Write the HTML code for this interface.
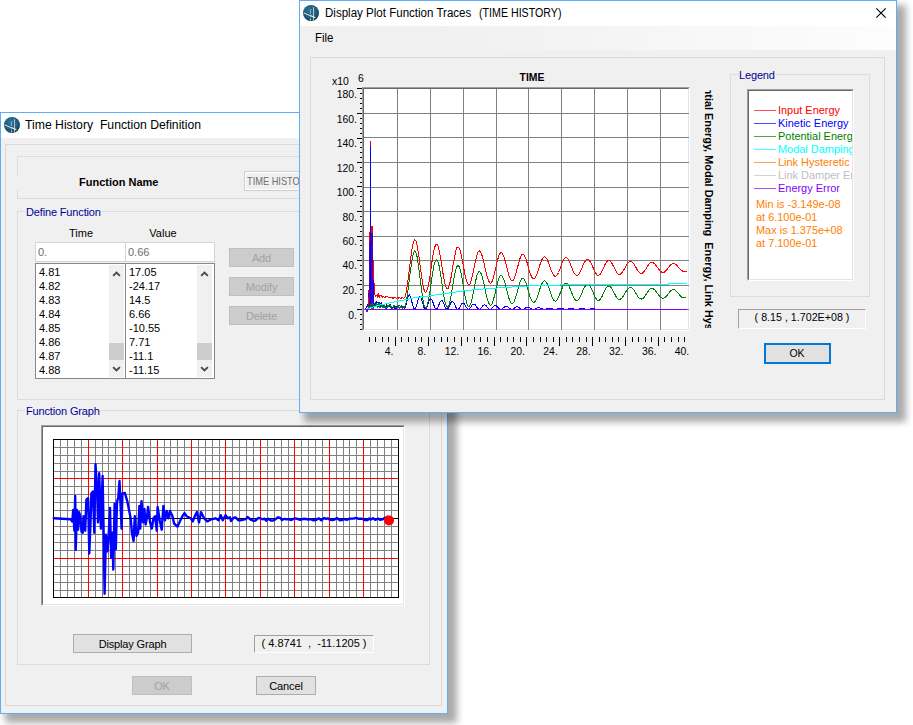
<!DOCTYPE html>
<html><head><meta charset="utf-8"><title>Time History Function</title>
<style>
html,body{margin:0;padding:0;background:#fff}
body{width:913px;height:725px;position:relative;overflow:hidden;font-family:"Liberation Sans",Arial,sans-serif;font-size:11px;color:#000}
div{box-sizing:border-box}
.abs,.t,.pl,.lg,.gl,.btn,.ttl{position:absolute;white-space:nowrap}
.win{position:absolute;background:#f0f0f0;border:1px solid #61acf5;box-shadow:7px 7px 7px 2px rgba(0,0,0,0.335);clip-path:inset(0 -24px -24px 0)}
.tbar{position:absolute;left:0;top:0;right:0;background:#fff}
.ttl{font-size:12px;line-height:14px;color:#000}
.t{font-size:11px;line-height:13px}
.pl{font-size:10.4px;line-height:12px}
.lg{font-size:10.95px;line-height:13px}
.gb{position:absolute;border:1px solid #dcdcdc}
.gl{font-size:11px;line-height:13px;color:#000096;background:#f0f0f0;padding:0 1px;letter-spacing:-0.15px}
.btn{font-size:11px;line-height:13px;letter-spacing:-0.15px;text-align:center;background:#e1e1e1;border:1px solid #adadad}
.btn.dis{background:#ccc;border-color:#bfbfbf;color:#a3a3a3}
.sunk{position:absolute;border:1px solid;border-color:#a0a0a0 #fff #fff #a0a0a0;text-align:center;font-size:11px}
</style></head><body>

<!-- ======================= back window: Time History Function Definition ======================= -->
<div class="win" style="left:0;top:112px;width:448px;height:602px"></div>
<div class="tbar" style="left:1px;top:113px;width:446px;height:25px;right:auto"></div>
<svg width="18" height="18" viewBox="0 0 18 18" style="position:absolute;left:3px;top:116px">
<defs><radialGradient id="ga" cx="45%" cy="40%" r="60%"><stop offset="0" stop-color="#2d7ca5"/><stop offset="0.6" stop-color="#1f6388"/><stop offset="0.85" stop-color="#184c69"/><stop offset="1" stop-color="#10303f"/></radialGradient></defs>
<circle cx="9" cy="9" r="8" fill="url(#ga)"/>
<path d="M11.2 3.2V16.6" stroke="#dfe9ef" stroke-width="1.1" fill="none"/>
<path d="M10.2 3.4V16.4" stroke="#16384c" stroke-width="0.9" fill="none"/>
<path d="M8.6 13V6.2Q8.6 5.3 9.6 5.3" stroke="#aac3d2" stroke-width="0.8" fill="none"/>
<path d="M1.8 8.6L13.4 13.8" stroke="#e6eef3" stroke-width="1.2" fill="none"/>
<path d="M1.6 7.8L9 11" stroke="#16384c" stroke-width="0.7" fill="none"/>
<path d="M8.6 14.4V16.4" stroke="#c9dbe5" stroke-width="1" fill="none"/>
</svg>
<div class="ttl" style="left:25px;top:118px;transform-origin:0 0;transform:scaleX(1.018)">Time History&nbsp; Function Definition</div>
<div class="gb" style="left:5px;top:144px;width:437px;height:562px;border-color:#dadada"></div>
<!-- function name group -->
<div class="gb" style="left:17px;top:156px;width:413px;height:43px"></div>
<div class="abs" style="left:16px;top:175px;width:3px;height:15px;background:#f0f0f0"></div>
<div class="t" style="left:79px;top:176px;font-weight:bold">Function Name</div>
<div class="abs" style="left:244px;top:171px;width:180px;height:20px;border:1px solid #cdcdcd;background:#f0f0f0;box-shadow:inset 0 0 0 1px #fff"></div>
<div class="t" style="left:247px;top:175px;color:#6d6d6d;transform-origin:0 0;transform:scaleX(0.84)">TIME HISTORY</div>
<!-- define function group -->
<div class="gb" style="left:17px;top:211px;width:413px;height:189px"></div>
<div class="gl" style="left:25px;top:206px">Define Function</div>
<div class="t" style="left:51px;top:227px;width:60px;text-align:center">Time</div>
<div class="t" style="left:133px;top:227px;width:60px;text-align:center">Value</div>
<div class="abs" style="left:35px;top:242px;width:91px;height:20px;border:1px solid #d4d4d4;background:#fff"></div>
<div class="abs" style="left:125px;top:242px;width:90px;height:20px;border:1px solid #d4d4d4;background:#fff"></div>
<div class="t" style="left:38px;top:246px;color:#6d6d6d">0.</div>
<div class="t" style="left:128px;top:246px;color:#6d6d6d">0.66</div>
<div class="abs" style="left:35px;top:263px;width:91px;height:116px;border:1px solid #828790;background:#fff"></div>
<div class="abs" style="left:125px;top:263px;width:90px;height:116px;border:1px solid #828790;background:#fff"></div>
<div class="abs" style="left:109px;top:265px;width:15px;height:112px;background:#f0f0f0"></div>
<div class="abs" style="left:197px;top:265px;width:15px;height:112px;background:#f0f0f0"></div>
<div class="abs" style="left:109px;top:343px;width:15px;height:17px;background:#cdcdcd"></div>
<div class="abs" style="left:197px;top:343px;width:15px;height:17px;background:#cdcdcd"></div>
<svg width="9" height="7" viewBox="0 0 9 7" style="position:absolute;left:112px;top:270px"><path d="M1.1 5.9L4.5 2.5L7.9 5.9" stroke="#4a4a4a" stroke-width="1.9" fill="none"/></svg><svg width="9" height="7" viewBox="0 0 9 7" style="position:absolute;left:112px;top:366px"><path d="M1.1 1.1L4.5 4.5L7.9 1.1" stroke="#4a4a4a" stroke-width="1.9" fill="none"/></svg><svg width="9" height="7" viewBox="0 0 9 7" style="position:absolute;left:200px;top:270px"><path d="M1.1 5.9L4.5 2.5L7.9 5.9" stroke="#4a4a4a" stroke-width="1.9" fill="none"/></svg><svg width="9" height="7" viewBox="0 0 9 7" style="position:absolute;left:200px;top:366px"><path d="M1.1 1.1L4.5 4.5L7.9 1.1" stroke="#4a4a4a" stroke-width="1.9" fill="none"/></svg>
<div class="t" style="left:39px;top:266px">4.81</div>
<div class="t" style="left:39px;top:280px">4.82</div>
<div class="t" style="left:39px;top:294px">4.83</div>
<div class="t" style="left:39px;top:308px">4.84</div>
<div class="t" style="left:39px;top:322px">4.85</div>
<div class="t" style="left:39px;top:336px">4.86</div>
<div class="t" style="left:39px;top:350px">4.87</div>
<div class="t" style="left:39px;top:364px">4.88</div>
<div class="t" style="left:129px;top:266px">17.05</div>
<div class="t" style="left:129px;top:280px">-24.17</div>
<div class="t" style="left:129px;top:294px">14.5</div>
<div class="t" style="left:129px;top:308px">6.66</div>
<div class="t" style="left:129px;top:322px">-10.55</div>
<div class="t" style="left:129px;top:336px">7.71</div>
<div class="t" style="left:129px;top:350px">-11.1</div>
<div class="t" style="left:129px;top:364px">-11.15</div>
<div class="btn dis" style="left:229px;top:248px;width:65px;height:19px;padding-top:3px">Add</div>
<div class="btn dis" style="left:229px;top:277px;width:65px;height:19px;padding-top:3px">Modify</div>
<div class="btn dis" style="left:229px;top:306px;width:65px;height:19px;padding-top:3px">Delete</div>
<!-- function graph group -->
<div class="gb" style="left:17px;top:410px;width:413px;height:255px"></div>
<div class="gl" style="left:25px;top:405px">Function Graph</div>
<div class="abs" style="left:41px;top:425px;width:364px;height:181px;background:#fff;border:1px solid;border-color:#a0a0a0 #fff #fff #a0a0a0"></div><div class="abs" style="left:42px;top:426px;width:362px;height:179px;border:1px solid;border-color:#696969 #e3e3e3 #e3e3e3 #696969"></div>
<svg width="913" height="725" viewBox="0 0 913 725" style="position:absolute;left:0;top:0" shape-rendering="crispEdges">
<g>
<line x1="60.5" y1="439.5" x2="60.5" y2="597.5" stroke="#808080"/>
<line x1="67.5" y1="439.5" x2="67.5" y2="597.5" stroke="#808080"/>
<line x1="74.5" y1="439.5" x2="74.5" y2="597.5" stroke="#808080"/>
<line x1="81.5" y1="439.5" x2="81.5" y2="597.5" stroke="#808080"/>
<line x1="95.5" y1="439.5" x2="95.5" y2="597.5" stroke="#808080"/>
<line x1="102.5" y1="439.5" x2="102.5" y2="597.5" stroke="#808080"/>
<line x1="108.5" y1="439.5" x2="108.5" y2="597.5" stroke="#808080"/>
<line x1="115.5" y1="439.5" x2="115.5" y2="597.5" stroke="#808080"/>
<line x1="129.5" y1="439.5" x2="129.5" y2="597.5" stroke="#808080"/>
<line x1="136.5" y1="439.5" x2="136.5" y2="597.5" stroke="#808080"/>
<line x1="143.5" y1="439.5" x2="143.5" y2="597.5" stroke="#808080"/>
<line x1="150.5" y1="439.5" x2="150.5" y2="597.5" stroke="#808080"/>
<line x1="164.5" y1="439.5" x2="164.5" y2="597.5" stroke="#808080"/>
<line x1="170.5" y1="439.5" x2="170.5" y2="597.5" stroke="#808080"/>
<line x1="177.5" y1="439.5" x2="177.5" y2="597.5" stroke="#808080"/>
<line x1="184.5" y1="439.5" x2="184.5" y2="597.5" stroke="#808080"/>
<line x1="198.5" y1="439.5" x2="198.5" y2="597.5" stroke="#808080"/>
<line x1="205.5" y1="439.5" x2="205.5" y2="597.5" stroke="#808080"/>
<line x1="212.5" y1="439.5" x2="212.5" y2="597.5" stroke="#808080"/>
<line x1="219.5" y1="439.5" x2="219.5" y2="597.5" stroke="#808080"/>
<line x1="232.5" y1="439.5" x2="232.5" y2="597.5" stroke="#808080"/>
<line x1="239.5" y1="439.5" x2="239.5" y2="597.5" stroke="#808080"/>
<line x1="246.5" y1="439.5" x2="246.5" y2="597.5" stroke="#808080"/>
<line x1="253.5" y1="439.5" x2="253.5" y2="597.5" stroke="#808080"/>
<line x1="267.5" y1="439.5" x2="267.5" y2="597.5" stroke="#808080"/>
<line x1="274.5" y1="439.5" x2="274.5" y2="597.5" stroke="#808080"/>
<line x1="281.5" y1="439.5" x2="281.5" y2="597.5" stroke="#808080"/>
<line x1="288.5" y1="439.5" x2="288.5" y2="597.5" stroke="#808080"/>
<line x1="301.5" y1="439.5" x2="301.5" y2="597.5" stroke="#808080"/>
<line x1="308.5" y1="439.5" x2="308.5" y2="597.5" stroke="#808080"/>
<line x1="315.5" y1="439.5" x2="315.5" y2="597.5" stroke="#808080"/>
<line x1="322.5" y1="439.5" x2="322.5" y2="597.5" stroke="#808080"/>
<line x1="336.5" y1="439.5" x2="336.5" y2="597.5" stroke="#808080"/>
<line x1="343.5" y1="439.5" x2="343.5" y2="597.5" stroke="#808080"/>
<line x1="349.5" y1="439.5" x2="349.5" y2="597.5" stroke="#808080"/>
<line x1="356.5" y1="439.5" x2="356.5" y2="597.5" stroke="#808080"/>
<line x1="370.5" y1="439.5" x2="370.5" y2="597.5" stroke="#808080"/>
<line x1="377.5" y1="439.5" x2="377.5" y2="597.5" stroke="#808080"/>
<line x1="384.5" y1="439.5" x2="384.5" y2="597.5" stroke="#808080"/>
<line x1="391.5" y1="439.5" x2="391.5" y2="597.5" stroke="#808080"/>
<line x1="53.5" y1="447.5" x2="398.5" y2="447.5" stroke="#808080"/>
<line x1="53.5" y1="455.5" x2="398.5" y2="455.5" stroke="#808080"/>
<line x1="53.5" y1="463.5" x2="398.5" y2="463.5" stroke="#808080"/>
<line x1="53.5" y1="471.5" x2="398.5" y2="471.5" stroke="#808080"/>
<line x1="53.5" y1="486.5" x2="398.5" y2="486.5" stroke="#808080"/>
<line x1="53.5" y1="494.5" x2="398.5" y2="494.5" stroke="#808080"/>
<line x1="53.5" y1="502.5" x2="398.5" y2="502.5" stroke="#808080"/>
<line x1="53.5" y1="510.5" x2="398.5" y2="510.5" stroke="#808080"/>
<line x1="53.5" y1="526.5" x2="398.5" y2="526.5" stroke="#808080"/>
<line x1="53.5" y1="534.5" x2="398.5" y2="534.5" stroke="#808080"/>
<line x1="53.5" y1="542.5" x2="398.5" y2="542.5" stroke="#808080"/>
<line x1="53.5" y1="550.5" x2="398.5" y2="550.5" stroke="#808080"/>
<line x1="53.5" y1="566.5" x2="398.5" y2="566.5" stroke="#808080"/>
<line x1="53.5" y1="574.5" x2="398.5" y2="574.5" stroke="#808080"/>
<line x1="53.5" y1="582.5" x2="398.5" y2="582.5" stroke="#808080"/>
<line x1="53.5" y1="590.5" x2="398.5" y2="590.5" stroke="#808080"/>
<line x1="88.5" y1="439.5" x2="88.5" y2="597.5" stroke="#f00"/>
<line x1="122.5" y1="439.5" x2="122.5" y2="597.5" stroke="#f00"/>
<line x1="157.5" y1="439.5" x2="157.5" y2="597.5" stroke="#f00"/>
<line x1="191.5" y1="439.5" x2="191.5" y2="597.5" stroke="#f00"/>
<line x1="225.5" y1="439.5" x2="225.5" y2="597.5" stroke="#f00"/>
<line x1="260.5" y1="439.5" x2="260.5" y2="597.5" stroke="#f00"/>
<line x1="294.5" y1="439.5" x2="294.5" y2="597.5" stroke="#f00"/>
<line x1="329.5" y1="439.5" x2="329.5" y2="597.5" stroke="#f00"/>
<line x1="363.5" y1="439.5" x2="363.5" y2="597.5" stroke="#f00"/>
<line x1="53.5" y1="478.5" x2="398.5" y2="478.5" stroke="#f00"/>
<line x1="53.5" y1="558.5" x2="398.5" y2="558.5" stroke="#f00"/>
<line x1="53.5" y1="518.5" x2="398.5" y2="518.5" stroke="#000"/>
<rect x="53.5" y="439.5" width="345.0" height="158.0" fill="none" stroke="#000"/>
</g>
<polyline points="53.7,518.3 70.7,519.3 72.3,521.4 73.2,510.0 74.4,530.7 75.2,495.9 75.7,549.9 76.9,510.0 78.1,529.7 79.0,512.1 80.2,516.2 81.5,531.7 82.7,532.8 83.5,516.2 85.2,530.7 86.4,499.7 88.1,498.0 89.3,553.5 90.6,520.3 91.4,493.5 93.0,491.4 94.3,532.8 95.5,464.1 97.2,491.4 98.0,522.4 99.2,473.2 100.9,528.6 102.6,475.9 103.4,518.3 104.6,593.8 105.9,534.8 107.5,551.4 108.8,532.8 110.0,507.9 111.2,557.6 112.5,532.8 113.3,569.6 114.6,503.8 115.8,549.3 117.0,501.7 118.3,497.6 119.5,481.0 121.6,528.6 122.4,493.5 124.9,493.0 127.4,501.7 128.2,505.9 130.7,518.3 131.9,532.8 133.6,541.0 134.8,516.2 136.5,535.9 138.1,532.8 139.4,505.9 140.2,528.6 141.5,501.3 143.1,522.4 144.4,509.0 145.6,524.5 146.8,518.3 148.1,506.9 150.1,522.4 151.8,528.6 153.5,518.3 155.1,516.2 156.8,530.7 157.6,506.9 159.7,520.3 161.7,529.7 163.4,505.9 165.0,520.3 166.7,511.0 168.4,518.3 170.0,511.0 172.5,516.2 174.1,523.5 177.5,526.6 180.4,520.3 182.4,516.2 184.5,513.1 186.6,516.2 190.7,518.3 192.8,521.4 194.8,516.2 196.9,512.1 199.0,522.4 201.0,512.1 204.1,518.3 207.3,521.4 211.4,519.3 215.5,518.3 218.6,520.3 220.7,515.2 222.8,520.3 225.5,515.2 227.9,518.3 230.0,517.2 231.0,521.0 233.8,517.6 235.6,517.5 238.6,520.3 240.4,520.4 243.6,519.7 245.8,519.2 247.6,517.0 250.7,519.6 253.2,520.7 255.5,520.5 258.4,517.9 260.4,518.2 262.4,519.3 264.4,518.7 266.2,520.6 268.4,518.8 270.9,520.5 273.2,520.5 275.6,519.1 278.0,517.3 280.3,517.9 281.9,520.1 283.8,518.9 286.6,519.2 288.7,519.1 291.2,520.0 292.9,519.2 294.9,518.3 297.8,519.0 300.3,519.8 303.3,518.8 305.9,519.0 308.3,519.6 310.7,519.1 313.0,520.3 315.7,520.1 318.9,518.3 321.3,520.3 324.3,518.0 326.1,518.8 327.8,518.3 329.5,519.5 332.4,520.1 334.2,519.6 336.9,518.1 339.9,520.2 341.8,520.1 344.1,519.0 347.3,519.8 349.1,518.8 351.5,518.6 353.5,518.6 356.2,517.9 358.7,518.9 360.3,518.6 362.9,519.0 364.6,520.0 367.5,520.0 369.3,518.5 370.9,519.6 373.0,518.3 375.2,519.8 378.1,518.5 380.0,519.8 382.5,519.4 384.2,518.2 386.0,517.5 387.5,516.8 389.0,520.4" fill="none" stroke="#0000ff" stroke-width="2.4" stroke-linejoin="round" stroke-linecap="round" shape-rendering="auto"/>
<circle cx="389" cy="520.4" r="5" fill="#ff0000" shape-rendering="auto"/>
</svg>
<div class="btn" style="left:73px;top:634px;width:119px;height:19px;padding-top:3px">Display Graph</div>
<div class="sunk" style="left:254px;top:635px;width:120px;height:18px;line-height:15px">( 4.8741&nbsp; ,&nbsp; -11.1205 )</div>
<div class="btn dis" style="left:132px;top:676px;width:60px;height:19px;padding-top:3px">OK</div>
<div class="btn" style="left:256px;top:676px;width:60px;height:19px;padding-top:3px">Cancel</div>

<!-- ======================= front window: Display Plot Function Traces ======================= -->
<div class="win" style="left:299px;top:0;width:598px;height:413px"></div>
<div class="tbar" style="left:300px;top:1px;width:596px;height:25px;right:auto"></div>
<div class="abs" style="left:300px;top:26px;width:596px;height:24px;background:linear-gradient(90deg,#f0f0f0 0%,#f1f1f1 30%,#fdfdfd 100%)"></div>
<svg width="18" height="18" viewBox="0 0 18 18" style="position:absolute;left:302px;top:4px">
<defs><radialGradient id="gb" cx="45%" cy="40%" r="60%"><stop offset="0" stop-color="#2d7ca5"/><stop offset="0.6" stop-color="#1f6388"/><stop offset="0.85" stop-color="#184c69"/><stop offset="1" stop-color="#10303f"/></radialGradient></defs>
<circle cx="9" cy="9" r="8" fill="url(#gb)"/>
<path d="M11.2 3.2V16.6" stroke="#dfe9ef" stroke-width="1.1" fill="none"/>
<path d="M10.2 3.4V16.4" stroke="#16384c" stroke-width="0.9" fill="none"/>
<path d="M8.6 13V6.2Q8.6 5.3 9.6 5.3" stroke="#aac3d2" stroke-width="0.8" fill="none"/>
<path d="M1.8 8.6L13.4 13.8" stroke="#e6eef3" stroke-width="1.2" fill="none"/>
<path d="M1.6 7.8L9 11" stroke="#16384c" stroke-width="0.7" fill="none"/>
<path d="M8.6 14.4V16.4" stroke="#c9dbe5" stroke-width="1" fill="none"/>
</svg>
<div class="ttl" style="left:325px;top:6px;transform-origin:0 0;transform:scaleX(0.962)">Display Plot Function Traces</div>
<div class="ttl" style="left:479px;top:6px;transform-origin:0 0;transform:scaleX(0.888)">(TIME HISTORY)</div>
<svg width="12" height="12" viewBox="0 0 12 12" style="position:absolute;left:875px;top:7px"><path d="M1.3 1.3L10.7 10.7M10.7 1.3L1.3 10.7" stroke="#000" stroke-width="1.15" fill="none"/></svg>
<div class="ttl" style="left:315px;top:31px;transform-origin:0 0;transform:scaleX(0.95)">File</div>
<div class="gb" style="left:310px;top:57px;width:575px;height:343px;border-color:#dadada"></div>
<!-- plot -->
<div class="pl" style="left:332px;top:76px">x10</div>
<div class="pl" style="left:358px;top:73px">6</div>
<div class="pl" style="left:502px;top:72px;width:60px;text-align:center;font-weight:bold">TIME</div>
<div class="abs" style="left:362px;top:87px;width:328px;height:244px;background:#fff;border:1px solid;border-color:#a0a0a0 #fff #fff #a0a0a0"></div><div class="abs" style="left:363px;top:88px;width:326px;height:242px;border:1px solid;border-color:#696969 #e3e3e3 #e3e3e3 #696969"></div>
<svg width="913" height="725" viewBox="0 0 913 725" style="position:absolute;left:0;top:0" shape-rendering="crispEdges">
<line x1="397.5" y1="89" x2="397.5" y2="330" stroke="#808080"/>
<line x1="430.5" y1="89" x2="430.5" y2="330" stroke="#808080"/>
<line x1="463.5" y1="89" x2="463.5" y2="330" stroke="#808080"/>
<line x1="496.5" y1="89" x2="496.5" y2="330" stroke="#808080"/>
<line x1="528.5" y1="89" x2="528.5" y2="330" stroke="#808080"/>
<line x1="561.5" y1="89" x2="561.5" y2="330" stroke="#808080"/>
<line x1="594.5" y1="89" x2="594.5" y2="330" stroke="#808080"/>
<line x1="627.5" y1="89" x2="627.5" y2="330" stroke="#808080"/>
<line x1="660.5" y1="89" x2="660.5" y2="330" stroke="#808080"/>
<line x1="364" y1="309.5" x2="689" y2="309.5" stroke="#808080"/>
<line x1="364" y1="285.5" x2="689" y2="285.5" stroke="#808080"/>
<line x1="364" y1="260.5" x2="689" y2="260.5" stroke="#808080"/>
<line x1="364" y1="236.5" x2="689" y2="236.5" stroke="#808080"/>
<line x1="364" y1="211.5" x2="689" y2="211.5" stroke="#808080"/>
<line x1="364" y1="187.5" x2="689" y2="187.5" stroke="#808080"/>
<line x1="364" y1="162.5" x2="689" y2="162.5" stroke="#808080"/>
<line x1="364" y1="137.5" x2="689" y2="137.5" stroke="#808080"/>
<line x1="364" y1="113.5" x2="689" y2="113.5" stroke="#808080"/>
<line x1="360" y1="329.5" x2="362" y2="329.5" stroke="#000"/>
<line x1="360" y1="324.5" x2="362" y2="324.5" stroke="#000"/>
<line x1="360" y1="319.5" x2="362" y2="319.5" stroke="#000"/>
<line x1="360" y1="314.5" x2="362" y2="314.5" stroke="#000"/>
<line x1="357" y1="309.5" x2="362" y2="309.5" stroke="#000"/>
<line x1="360" y1="304.5" x2="362" y2="304.5" stroke="#000"/>
<line x1="360" y1="299.5" x2="362" y2="299.5" stroke="#000"/>
<line x1="360" y1="294.5" x2="362" y2="294.5" stroke="#000"/>
<line x1="360" y1="289.5" x2="362" y2="289.5" stroke="#000"/>
<line x1="357" y1="284.5" x2="362" y2="284.5" stroke="#000"/>
<line x1="360" y1="280.5" x2="362" y2="280.5" stroke="#000"/>
<line x1="360" y1="275.5" x2="362" y2="275.5" stroke="#000"/>
<line x1="360" y1="270.5" x2="362" y2="270.5" stroke="#000"/>
<line x1="360" y1="265.5" x2="362" y2="265.5" stroke="#000"/>
<line x1="357" y1="260.5" x2="362" y2="260.5" stroke="#000"/>
<line x1="360" y1="255.5" x2="362" y2="255.5" stroke="#000"/>
<line x1="360" y1="250.5" x2="362" y2="250.5" stroke="#000"/>
<line x1="360" y1="245.5" x2="362" y2="245.5" stroke="#000"/>
<line x1="360" y1="240.5" x2="362" y2="240.5" stroke="#000"/>
<line x1="357" y1="236.5" x2="362" y2="236.5" stroke="#000"/>
<line x1="360" y1="231.5" x2="362" y2="231.5" stroke="#000"/>
<line x1="360" y1="226.5" x2="362" y2="226.5" stroke="#000"/>
<line x1="360" y1="221.5" x2="362" y2="221.5" stroke="#000"/>
<line x1="360" y1="216.5" x2="362" y2="216.5" stroke="#000"/>
<line x1="357" y1="211.5" x2="362" y2="211.5" stroke="#000"/>
<line x1="360" y1="206.5" x2="362" y2="206.5" stroke="#000"/>
<line x1="360" y1="201.5" x2="362" y2="201.5" stroke="#000"/>
<line x1="360" y1="196.5" x2="362" y2="196.5" stroke="#000"/>
<line x1="360" y1="191.5" x2="362" y2="191.5" stroke="#000"/>
<line x1="357" y1="186.5" x2="362" y2="186.5" stroke="#000"/>
<line x1="360" y1="182.5" x2="362" y2="182.5" stroke="#000"/>
<line x1="360" y1="177.5" x2="362" y2="177.5" stroke="#000"/>
<line x1="360" y1="172.5" x2="362" y2="172.5" stroke="#000"/>
<line x1="360" y1="167.5" x2="362" y2="167.5" stroke="#000"/>
<line x1="357" y1="162.5" x2="362" y2="162.5" stroke="#000"/>
<line x1="360" y1="157.5" x2="362" y2="157.5" stroke="#000"/>
<line x1="360" y1="152.5" x2="362" y2="152.5" stroke="#000"/>
<line x1="360" y1="147.5" x2="362" y2="147.5" stroke="#000"/>
<line x1="360" y1="142.5" x2="362" y2="142.5" stroke="#000"/>
<line x1="357" y1="138.5" x2="362" y2="138.5" stroke="#000"/>
<line x1="360" y1="133.5" x2="362" y2="133.5" stroke="#000"/>
<line x1="360" y1="128.5" x2="362" y2="128.5" stroke="#000"/>
<line x1="360" y1="123.5" x2="362" y2="123.5" stroke="#000"/>
<line x1="360" y1="118.5" x2="362" y2="118.5" stroke="#000"/>
<line x1="357" y1="113.5" x2="362" y2="113.5" stroke="#000"/>
<line x1="360" y1="108.5" x2="362" y2="108.5" stroke="#000"/>
<line x1="360" y1="103.5" x2="362" y2="103.5" stroke="#000"/>
<line x1="360" y1="98.5" x2="362" y2="98.5" stroke="#000"/>
<line x1="360" y1="93.5" x2="362" y2="93.5" stroke="#000"/>
<line x1="357" y1="88.5" x2="362" y2="88.5" stroke="#000"/>
<line x1="369.5" y1="337" x2="369.5" y2="342" stroke="#000"/>
<line x1="375.5" y1="337" x2="375.5" y2="342" stroke="#000"/>
<line x1="382.5" y1="337" x2="382.5" y2="342" stroke="#000"/>
<line x1="388.5" y1="337" x2="388.5" y2="342" stroke="#000"/>
<line x1="395.5" y1="337" x2="395.5" y2="346" stroke="#000"/>
<line x1="401.5" y1="337" x2="401.5" y2="342" stroke="#000"/>
<line x1="408.5" y1="337" x2="408.5" y2="342" stroke="#000"/>
<line x1="415.5" y1="337" x2="415.5" y2="342" stroke="#000"/>
<line x1="421.5" y1="337" x2="421.5" y2="342" stroke="#000"/>
<line x1="428.5" y1="337" x2="428.5" y2="346" stroke="#000"/>
<line x1="434.5" y1="337" x2="434.5" y2="342" stroke="#000"/>
<line x1="441.5" y1="337" x2="441.5" y2="342" stroke="#000"/>
<line x1="447.5" y1="337" x2="447.5" y2="342" stroke="#000"/>
<line x1="454.5" y1="337" x2="454.5" y2="342" stroke="#000"/>
<line x1="461.5" y1="337" x2="461.5" y2="346" stroke="#000"/>
<line x1="467.5" y1="337" x2="467.5" y2="342" stroke="#000"/>
<line x1="474.5" y1="337" x2="474.5" y2="342" stroke="#000"/>
<line x1="480.5" y1="337" x2="480.5" y2="342" stroke="#000"/>
<line x1="487.5" y1="337" x2="487.5" y2="342" stroke="#000"/>
<line x1="494.5" y1="337" x2="494.5" y2="346" stroke="#000"/>
<line x1="500.5" y1="337" x2="500.5" y2="342" stroke="#000"/>
<line x1="507.5" y1="337" x2="507.5" y2="342" stroke="#000"/>
<line x1="513.5" y1="337" x2="513.5" y2="342" stroke="#000"/>
<line x1="520.5" y1="337" x2="520.5" y2="342" stroke="#000"/>
<line x1="526.5" y1="337" x2="526.5" y2="346" stroke="#000"/>
<line x1="533.5" y1="337" x2="533.5" y2="342" stroke="#000"/>
<line x1="540.5" y1="337" x2="540.5" y2="342" stroke="#000"/>
<line x1="546.5" y1="337" x2="546.5" y2="342" stroke="#000"/>
<line x1="553.5" y1="337" x2="553.5" y2="342" stroke="#000"/>
<line x1="559.5" y1="337" x2="559.5" y2="346" stroke="#000"/>
<line x1="566.5" y1="337" x2="566.5" y2="342" stroke="#000"/>
<line x1="572.5" y1="337" x2="572.5" y2="342" stroke="#000"/>
<line x1="579.5" y1="337" x2="579.5" y2="342" stroke="#000"/>
<line x1="586.5" y1="337" x2="586.5" y2="342" stroke="#000"/>
<line x1="592.5" y1="337" x2="592.5" y2="346" stroke="#000"/>
<line x1="599.5" y1="337" x2="599.5" y2="342" stroke="#000"/>
<line x1="605.5" y1="337" x2="605.5" y2="342" stroke="#000"/>
<line x1="612.5" y1="337" x2="612.5" y2="342" stroke="#000"/>
<line x1="618.5" y1="337" x2="618.5" y2="342" stroke="#000"/>
<line x1="625.5" y1="337" x2="625.5" y2="346" stroke="#000"/>
<line x1="632.5" y1="337" x2="632.5" y2="342" stroke="#000"/>
<line x1="638.5" y1="337" x2="638.5" y2="342" stroke="#000"/>
<line x1="645.5" y1="337" x2="645.5" y2="342" stroke="#000"/>
<line x1="651.5" y1="337" x2="651.5" y2="342" stroke="#000"/>
<line x1="658.5" y1="337" x2="658.5" y2="346" stroke="#000"/>
<line x1="664.5" y1="337" x2="664.5" y2="342" stroke="#000"/>
<line x1="671.5" y1="337" x2="671.5" y2="342" stroke="#000"/>
<line x1="678.5" y1="337" x2="678.5" y2="342" stroke="#000"/>
<line x1="684.5" y1="337" x2="684.5" y2="342" stroke="#000"/>
<g fill="none" stroke-width="1" shape-rendering="crispEdges" stroke-linejoin="round">
<polyline points="365.0,309.5 366.5,308.5 367.5,306.0 368.5,303.0 368.8,290.5 369.1,308.4 369.4,241.8 369.7,308.7 370.0,232.3 370.3,306.0 370.5,141.0 370.7,300.0 370.8,225.9 371.1,308.8 371.4,227.1 371.7,308.9 372.0,226.5 372.3,308.7 372.6,234.2 372.9,307.3 373.2,260.9 373.5,308.5 373.8,272.0 374.2,293.0 374.4,292.6 375.1,294.9 375.8,296.7 376.5,295.2 377.2,294.6 377.9,297.4 378.6,293.7 379.3,297.3 380.0,295.3 380.7,295.1 381.0,295.4 381.7,296.0 382.4,297.6 383.1,295.9 383.8,297.0 384.5,297.3 385.2,296.7 385.9,297.2 386.6,296.2 387.3,296.3 388.0,296.7 388.7,297.8 389.4,297.4 390.1,297.2 390.8,297.8 391.5,297.7 392.0,297.6 392.7,298.2 393.4,298.1 394.1,297.6 394.8,298.0 395.5,297.9 396.2,298.3 396.9,298.2 397.6,297.8 398.3,298.4 399.0,297.7 399.7,298.0 400.4,298.3 401.1,297.8 401.8,298.1 402.5,297.8 403.2,298.3 403.9,298.4 404.0,298.2 405.1,296.8 406.2,292.6 407.2,286.1 408.3,278.0 409.4,268.9 410.5,259.9 411.6,251.8 412.6,245.3 413.7,241.1 414.8,239.7 415.9,241.0 417.0,244.7 418.0,250.6 419.1,257.9 420.2,266.0 421.3,274.2 422.4,281.5 423.4,287.4 424.5,291.1 425.6,292.4 426.7,291.2 427.8,287.8 428.9,282.4 430.0,275.7 431.1,268.2 432.1,260.8 433.2,254.1 434.3,248.7 435.4,245.3 436.5,244.1 437.6,245.2 438.7,248.4 439.8,253.4 440.9,259.6 441.9,266.6 443.0,273.5 444.1,279.7 445.2,284.7 446.3,287.9 447.4,289.0 448.4,288.0 449.5,285.0 450.5,280.3 451.6,274.5 452.6,267.9 453.7,261.4 454.8,255.6 455.8,250.9 456.8,247.9 457.9,246.9 459.0,247.8 460.1,250.5 461.2,254.7 462.3,260.0 463.4,265.9 464.4,271.8 465.5,277.1 466.6,281.3 467.7,284.0 468.8,284.9 469.9,284.1 470.9,281.7 471.9,277.9 473.0,273.2 474.1,267.9 475.1,262.6 476.2,257.9 477.2,254.1 478.2,251.7 479.3,250.9 480.3,251.6 481.3,253.5 482.4,256.5 483.4,260.3 484.4,264.8 485.4,269.3 486.4,273.8 487.4,277.6 488.5,280.6 489.5,282.5 490.5,283.2 491.6,282.5 492.6,280.3 493.6,276.9 494.7,272.6 495.8,267.9 496.8,263.2 497.9,258.9 498.9,255.5 499.9,253.3 501.0,252.6 502.0,253.2 503.0,254.8 504.1,257.5 505.1,260.8 506.1,264.7 507.1,268.7 508.1,272.6 509.1,275.9 510.2,278.6 511.2,280.2 512.2,280.8 513.2,280.2 514.3,278.3 515.4,275.3 516.4,271.6 517.5,267.6 518.5,263.5 519.6,259.8 520.6,256.8 521.7,254.9 522.7,254.3 523.8,254.9 524.9,256.6 526.0,259.3 527.1,262.8 528.2,266.6 529.2,270.3 530.3,273.8 531.4,276.5 532.5,278.2 533.6,278.8 534.7,278.3 535.8,276.7 536.9,274.2 538.0,271.2 539.0,267.8 540.1,264.3 541.2,261.3 542.3,258.8 543.4,257.2 544.5,256.7 545.6,257.2 546.7,258.6 547.7,260.8 548.8,263.5 549.9,266.5 551.0,269.6 552.1,272.3 553.1,274.5 554.2,275.9 555.3,276.4 556.4,275.9 557.4,274.6 558.5,272.5 559.5,269.9 560.6,267.1 561.7,264.2 562.7,261.6 563.8,259.5 564.8,258.2 565.9,257.7 567.0,258.1 568.1,259.4 569.1,261.3 570.2,263.8 571.3,266.5 572.4,269.3 573.5,271.8 574.5,273.7 575.6,275.0 576.7,275.4 577.8,275.0 578.9,273.9 580.0,272.1 581.1,269.9 582.2,267.4 583.2,264.9 584.3,262.7 585.4,260.9 586.5,259.8 587.6,259.4 588.7,259.8 589.7,260.9 590.8,262.7 591.9,264.9 593.0,267.4 594.0,269.9 595.1,272.1 596.2,273.9 597.2,275.0 598.3,275.4 599.3,275.0 600.4,274.0 601.4,272.3 602.5,270.2 603.5,267.9 604.5,265.5 605.6,263.4 606.6,261.7 607.7,260.7 608.7,260.3 609.8,260.6 610.8,261.6 611.9,263.2 612.9,265.2 614.0,267.3 615.1,269.5 616.1,271.5 617.2,273.1 618.2,274.1 619.3,274.4 620.3,274.1 621.3,273.4 622.4,272.1 623.4,270.6 624.4,268.8 625.4,266.9 626.4,265.1 627.4,263.6 628.5,262.3 629.5,261.6 630.5,261.3 631.6,261.6 632.6,262.5 633.7,263.8 634.8,265.5 635.9,267.3 636.9,269.2 638.0,270.9 639.1,272.2 640.1,273.1 641.2,273.4 642.3,273.1 643.3,272.3 644.4,271.1 645.4,269.6 646.5,267.9 647.6,266.2 648.6,264.7 649.7,263.5 650.7,262.7 651.8,262.4 652.8,262.6 653.8,263.2 654.9,264.1 655.9,265.4 656.9,266.7 657.9,268.2 658.9,269.5 659.9,270.8 661.0,271.7 662.0,272.3 663.0,272.5 664.0,272.3 665.1,271.6 666.1,270.6 667.2,269.4 668.2,267.9 669.2,266.5 670.3,265.3 671.3,264.3 672.4,263.6 673.4,263.4 674.4,263.6 675.4,264.2 676.5,265.0 677.5,266.1 678.5,267.3 679.5,268.6 680.5,269.7 681.6,270.5 682.6,271.1 683.6,271.3 685.0,271.3 686.5,271.3" stroke="#ff0000"/>
<polyline points="365.0,309.5 366.5,307.0 367.5,305.0 368.5,306.0" stroke="#0000ff"/>
<polyline points="368.9,293.4 369.2,305.5 369.5,242.6 369.8,306.2 370.1,236.8 370.3,306.0 370.7,300.0 370.8,233.6 371.1,307.2 371.4,235.7 371.7,305.2 372.0,232.8 372.3,306.3 372.6,252.5 372.9,306.2 373.2,280.3" stroke="#0000ff" stroke-opacity="0.7"/>
<polyline points="370.5,306.0 370.5,146.0" stroke="#0000ff"/>
<polyline points="373.2,280.3 373.6,307.9 374.1,306.7 374.6,303.1 375.1,303.9 375.6,305.8 376.1,301.6 376.6,304.5 377.1,302.6 377.6,302.4 378.1,302.0 378.6,306.7 379.1,302.6 379.6,303.4 380.1,304.4 380.6,307.5 381.1,302.5 381.6,304.9 382.1,305.6 382.6,307.7 383.1,307.3 383.6,307.6 384.1,304.1 384.6,305.0 385.0,305.6 385.5,308.3 386.0,308.7 386.5,304.6 387.0,304.8 387.5,305.1 388.0,305.2 388.5,306.4 389.0,307.0 389.5,305.5 390.0,304.3 390.5,306.3 391.0,306.1 391.5,307.0 392.0,308.7 392.5,307.6 393.0,306.9 393.5,307.3 394.0,307.6 394.5,305.1 395.0,308.5 395.5,308.1 396.0,308.5 396.5,308.2 397.0,306.6 397.5,306.7 398.0,305.7 398.5,307.6 399.0,305.6 399.5,305.7 400.0,306.2 400.5,306.1 401.0,306.8 401.5,305.9 402.0,305.8 402.5,306.3 403.0,306.2 403.5,307.1 404.5,308.5 405.4,307.2 406.4,303.8 407.3,299.5 408.3,296.1 409.2,294.8 410.1,295.8 411.0,298.4 411.9,302.1 412.8,305.7 413.7,308.3 414.6,309.3 415.5,308.4 416.4,306.1 417.2,303.0 418.1,299.8 419.0,297.5 419.9,296.6 420.8,297.5 421.7,299.8 422.6,302.9 423.5,306.1 424.4,308.4 425.3,309.3 426.2,308.6 427.1,306.7 428.0,304.0 429.0,301.4 429.9,299.4 430.8,298.7 431.7,299.4 432.6,301.3 433.5,304.0 434.4,306.6 435.3,308.6 436.2,309.3 437.1,308.7 438.0,307.1 438.9,304.9 439.8,302.6 440.7,301.0 441.6,300.4 442.5,301.0 443.4,302.6 444.3,304.8 445.2,307.1 446.1,308.7 447.0,309.3 447.9,308.8 448.8,307.3 449.6,305.4 450.5,303.4 451.4,301.9 452.3,301.4 453.2,301.9 454.1,303.4 455.0,305.3 455.9,307.3 456.8,308.8 457.7,309.3 458.6,308.9 459.5,307.7 460.4,306.2 461.2,304.6 462.1,303.4 463.0,303.0 463.9,303.4 464.8,304.6 465.7,306.1 466.6,307.7 467.5,308.9 468.4,309.3 469.3,308.9 470.2,308.0 471.1,306.7 472.0,305.3 472.9,304.4 473.8,304.0 474.7,304.4 475.6,305.3 476.5,306.6 477.4,308.0 478.3,308.9 479.2,309.3 480.1,309.0 481.0,308.2 481.9,307.1 482.8,305.9 483.7,305.1 484.6,304.8 485.5,305.1 486.4,305.9 487.3,307.1 488.2,308.2 489.1,309.0 490.0,309.3 490.9,309.1 491.8,308.4 492.7,307.5 493.6,306.5 494.5,305.8 495.4,305.6 496.3,305.8 497.2,306.5 498.1,307.4 499.0,308.4 499.9,309.1 500.8,309.3 501.7,309.1 502.6,308.5 503.5,307.8 504.4,307.0 505.3,306.4 506.2,306.2 507.1,306.4 508.0,307.0 508.9,307.8 509.8,308.5 510.7,309.1 511.6,309.3 512.5,309.1 513.4,308.7 514.3,308.1 515.2,307.4 516.1,307.0 517.0,306.8 517.9,307.0 518.8,307.4 519.7,308.1 520.6,308.7 521.5,309.1 522.4,309.3 523.3,309.2 524.2,308.8 525.1,308.3 526.0,307.8 526.9,307.4 527.8,307.3 528.7,307.4 529.6,307.8 530.5,308.3 531.4,308.8 532.3,309.2 533.2,309.3 534.1,309.2 535.0,308.9 535.9,308.5 536.8,308.1 537.7,307.8 538.6,307.7 539.5,307.8 540.4,308.1 541.3,308.5 542.2,308.9 543.1,309.2 544.0,309.3 544.9,309.2 545.8,309.0 546.7,308.7 547.6,308.3 548.5,308.1 549.4,308.0 550.3,308.1 551.2,308.3 552.1,308.6 553.0,309.0 553.9,309.2 554.8,309.3 555.7,309.2 556.6,309.1 557.5,308.8 558.4,308.6 559.3,308.4 560.2,308.3 561.1,308.4 562.0,308.6 562.9,308.8 563.8,309.1 564.7,309.2 565.6,309.3 566.5,309.2 567.4,309.1 568.3,308.9 569.2,308.7 570.1,308.6 571.0,308.5 571.9,308.6 572.8,308.7 573.7,308.9 574.6,309.1 575.5,309.2 576.4,309.3 577.3,309.3 578.2,309.2 579.1,309.0 580.0,308.9 580.9,308.7 581.8,308.7 582.7,308.7 583.6,308.8 584.5,309.0 585.4,309.1 586.3,309.3 587.2,309.3 588.1,309.3 589.0,309.2 589.9,309.1 590.8,308.9 591.7,308.8 592.6,308.8 593.5,308.8 594.4,308.9 595.3,309.1 596.2,309.2 597.1,309.3 598.0,309.3" stroke="#0000ff"/>
<polyline points="366.0,309.5 368.0,308.8 369.0,306.1 369.4,308.4 369.9,307.2 370.3,304.8 370.8,304.8 371.2,304.8 371.7,304.5 372.0,303.0 372.4,306.8 372.9,307.6 373.3,304.9 373.8,305.1 374.2,303.1 374.7,303.2 375.1,304.5 375.6,304.1 376.0,307.0 376.5,303.7 376.9,303.0 377.4,307.7 377.8,305.6 378.3,303.8 378.7,305.8 379.2,303.3 379.6,305.8 380.1,308.0 380.5,307.4 381.0,306.7 381.4,304.6 381.9,305.2 382.3,304.3 382.8,307.1 383.2,306.1 383.7,307.2 384.1,305.2 384.6,304.8 385.0,307.5 385.5,308.3 385.9,307.7 386.4,307.5 386.8,307.6 387.3,307.3 387.7,305.1 388.0,306.6 388.4,306.0 388.9,304.9 389.3,304.9 389.8,305.8 390.2,305.8 390.7,307.3 391.1,308.2 391.6,306.5 392.0,308.1 392.5,308.3 392.9,308.2 393.4,306.3 393.8,305.9 394.3,305.9 394.7,305.8 395.2,305.9 395.6,307.2 396.1,308.1 396.5,307.9 397.0,306.8 397.4,307.4 397.9,307.8 398.3,305.7 398.8,307.4 399.2,308.2 399.7,307.8 400.1,307.7 400.6,307.0 401.0,306.2 401.5,307.9 401.9,306.7 402.4,307.9 402.8,308.4 403.3,306.9 403.7,306.9 404.0,307.5 405.1,306.1 406.2,302.1 407.2,295.8 408.3,287.9 409.4,279.2 410.5,270.5 411.6,262.6 412.6,256.3 413.7,252.3 414.8,250.9 415.9,252.3 417.0,256.4 418.0,262.7 419.1,270.6 420.2,279.4 421.3,288.3 422.4,296.2 423.4,302.5 424.5,306.6 425.6,308.0 426.7,306.8 427.8,303.4 428.9,298.0 430.0,291.2 431.1,283.7 432.1,276.2 433.2,269.4 434.3,264.0 435.4,260.6 436.5,259.4 437.6,260.6 438.7,264.0 439.8,269.3 440.9,275.9 441.9,283.3 443.0,290.8 444.1,297.4 445.2,302.7 446.3,306.1 447.4,307.3 448.4,306.3 449.5,303.3 450.5,298.7 451.6,292.9 452.6,286.4 453.7,279.9 454.8,274.1 455.8,269.5 456.8,266.5 457.9,265.5 459.0,266.5 460.1,269.4 461.2,274.0 462.3,279.7 463.4,286.1 464.4,292.4 465.5,298.1 466.6,302.7 467.7,305.6 468.8,306.6 469.9,305.7 470.9,303.2 471.9,299.3 473.0,294.4 474.1,289.0 475.1,283.5 476.2,278.6 477.2,274.7 478.2,272.2 479.3,271.3 480.3,272.0 481.3,274.0 482.4,277.2 483.4,281.2 484.4,285.9 485.4,290.7 486.4,295.4 487.4,299.4 488.5,302.6 489.5,304.6 490.5,305.3 491.6,304.6 492.6,302.4 493.6,299.1 494.7,295.0 495.8,290.4 496.8,285.7 497.9,281.6 498.9,278.3 499.9,276.1 501.0,275.4 502.0,276.0 503.0,277.6 504.1,280.3 505.1,283.6 506.1,287.5 507.1,291.5 508.1,295.4 509.1,298.7 510.2,301.4 511.2,303.0 512.2,303.6 513.2,303.0 514.3,301.2 515.4,298.3 516.4,294.8 517.5,290.9 518.5,286.9 519.6,283.4 520.6,280.5 521.7,278.7 522.7,278.1 523.8,278.7 524.9,280.4 526.0,283.1 527.1,286.5 528.2,290.3 529.2,294.1 530.3,297.5 531.4,300.2 532.5,301.9 533.6,302.5 534.7,302.0 535.8,300.4 536.9,298.0 538.0,295.0 539.0,291.7 540.1,288.3 541.2,285.3 542.3,282.9 543.4,281.3 544.5,280.8 545.6,281.3 546.7,282.7 547.7,285.0 548.8,287.8 549.9,291.0 551.0,294.2 552.1,297.0 553.1,299.3 554.2,300.7 555.3,301.2 556.4,300.8 557.4,299.5 558.5,297.4 559.5,294.9 560.6,292.1 561.7,289.2 562.7,286.7 563.8,284.6 564.8,283.3 565.9,282.9 567.0,283.3 568.1,284.6 569.1,286.5 570.2,289.0 571.3,291.7 572.4,294.4 573.5,296.9 574.5,298.8 575.6,300.1 576.7,300.5 577.8,300.1 578.9,298.9 580.0,297.1 581.1,294.9 582.2,292.4 583.2,289.8 584.3,287.6 585.4,285.8 586.5,284.6 587.6,284.2 588.7,284.6 589.7,285.8 590.8,287.6 591.9,289.8 593.0,292.3 594.0,294.9 595.1,297.1 596.2,298.9 597.2,300.1 598.3,300.5 599.3,300.1 600.4,299.1 601.4,297.5 602.5,295.5 603.5,293.2 604.5,291.0 605.6,289.0 606.6,287.4 607.7,286.4 608.7,286.0 609.8,286.3 610.8,287.3 611.9,288.8 612.9,290.7 614.0,292.8 615.1,294.8 616.1,296.7 617.2,298.2 618.2,299.2 619.3,299.5 620.3,299.3 621.3,298.5 622.4,297.4 623.4,295.9 624.4,294.3 625.4,292.5 626.4,290.9 627.4,289.4 628.5,288.3 629.5,287.5 630.5,287.3 631.6,287.6 632.6,288.4 633.7,289.7 634.8,291.4 635.9,293.2 636.9,295.0 638.0,296.7 639.1,298.0 640.1,298.8 641.2,299.1 642.3,298.8 643.3,298.1 644.4,296.9 645.4,295.4 646.5,293.7 647.6,292.0 648.6,290.5 649.7,289.3 650.7,288.6 651.8,288.3 652.8,288.5 653.8,289.1 654.9,290.0 655.9,291.3 656.9,292.6 657.9,294.1 658.9,295.4 659.9,296.7 661.0,297.6 662.0,298.2 663.0,298.4 664.0,298.2 665.1,297.6 666.1,296.6 667.2,295.3 668.2,293.9 669.2,292.6 670.3,291.3 671.3,290.3 672.4,289.7 673.4,289.5 674.4,289.7 675.4,290.3 676.5,291.2 677.5,292.4 678.5,293.6 679.5,294.9 680.5,296.1 681.6,297.0 682.6,297.6 683.6,297.8 685.0,297.7 686.5,297.6" stroke="#008000"/>
<polyline points="367.0,309.0 369.6,308.0 380.0,305.0 398.5,301.1 414.0,297.9 430.7,295.6 447.0,293.3 463.0,291.0 480.0,289.2 497.0,288.0 514.0,286.9 531.0,285.9 548.0,285.3 565.0,284.9 590.0,284.6 620.0,284.5 668.0,284.5 669.0,283.5 686.5,283.5" stroke="#00ffff"/>
<polyline points="364.5,309.5 366.5,309.5 367.0,311.5 367.6,309.5 686.5,309.5" stroke="#8000ff"/>
</g>
</svg>
<div class="pl" style="left:320px;top:310px;width:37px;text-align:right">0.</div>
<div class="pl" style="left:320px;top:285px;width:37px;text-align:right">20.</div>
<div class="pl" style="left:320px;top:260px;width:37px;text-align:right">40.</div>
<div class="pl" style="left:320px;top:236px;width:37px;text-align:right">60.</div>
<div class="pl" style="left:320px;top:212px;width:37px;text-align:right">80.</div>
<div class="pl" style="left:320px;top:187px;width:37px;text-align:right">100.</div>
<div class="pl" style="left:320px;top:163px;width:37px;text-align:right">120.</div>
<div class="pl" style="left:320px;top:138px;width:37px;text-align:right">140.</div>
<div class="pl" style="left:320px;top:114px;width:37px;text-align:right">160.</div>
<div class="pl" style="left:320px;top:89px;width:37px;text-align:right">180.</div>
<div class="pl" style="left:363.4px;top:346px;width:30px;text-align:right">4.</div>
<div class="pl" style="left:396.2px;top:346px;width:30px;text-align:right">8.</div>
<div class="pl" style="left:429.1px;top:346px;width:30px;text-align:right">12.</div>
<div class="pl" style="left:462.0px;top:346px;width:30px;text-align:right">16.</div>
<div class="pl" style="left:494.9px;top:346px;width:30px;text-align:right">20.</div>
<div class="pl" style="left:527.8px;top:346px;width:30px;text-align:right">24.</div>
<div class="pl" style="left:560.6px;top:346px;width:30px;text-align:right">28.</div>
<div class="pl" style="left:593.5px;top:346px;width:30px;text-align:right">32.</div>
<div class="pl" style="left:626.4px;top:346px;width:30px;text-align:right">36.</div>
<div class="pl" style="left:659.2px;top:346px;width:30px;text-align:right">40.</div>
<div class="abs" style="left:701px;top:90px;width:15px;height:238px;overflow:hidden">
<div class="abs" style="left:2px;top:-26px;transform-origin:0 0;transform:translate(12px,0) rotate(90deg);font-size:10.9px;line-height:12px;font-weight:bold">Potential Energy, Modal Damping&nbsp; Energy, Link Hysteretic Energy</div>
</div>
<!-- legend -->
<div class="gb" style="left:730px;top:74px;width:140px;height:223px"></div>
<div class="gl" style="left:738px;top:69px">Legend</div>
<div class="abs" style="left:747px;top:89px;width:107px;height:192px;background:#fff;border:1px solid;border-color:#a0a0a0 #fff #fff #a0a0a0"></div><div class="abs" style="left:748px;top:90px;width:105px;height:190px;border:1px solid;border-color:#696969 #e3e3e3 #e3e3e3 #696969"></div>
<div class="abs" style="left:749px;top:91px;width:103px;height:187px;overflow:hidden">
<div class="abs" style="left:-749px;top:-91px;width:913px;height:725px">
<div style="position:absolute;left:754px;top:110px;width:22px;height:1px;background:#ff0000;opacity:0.7"></div>
<div class="lg" style="left:778px;top:104px;color:#ff0000">Input Energy</div>
<div style="position:absolute;left:754px;top:123px;width:22px;height:1px;background:#0000ff;opacity:0.7"></div>
<div class="lg" style="left:778px;top:117px;color:#0000ff">Kinetic Energy</div>
<div style="position:absolute;left:754px;top:136px;width:22px;height:1px;background:#008000;opacity:0.7"></div>
<div class="lg" style="left:778px;top:130px;color:#008000">Potential Energy</div>
<div style="position:absolute;left:754px;top:149px;width:22px;height:1px;background:#00ffff;opacity:0.7"></div>
<div class="lg" style="left:778px;top:143px;color:#00ffff">Modal Damping Energy</div>
<div style="position:absolute;left:754px;top:162px;width:22px;height:1px;background:#ff8000;opacity:0.7"></div>
<div class="lg" style="left:778px;top:156px;color:#ff8000">Link Hysteretic Energy</div>
<div style="position:absolute;left:754px;top:175px;width:22px;height:1px;background:#c0c0c0;opacity:0.7"></div>
<div class="lg" style="left:778px;top:169px;color:#c0c0c0">Link Damper Energy</div>
<div style="position:absolute;left:754px;top:188px;width:22px;height:1px;background:#8000ff;opacity:0.7"></div>
<div class="lg" style="left:778px;top:182px;color:#8000ff">Energy Error</div>
<div class="lg" style="left:756px;top:198px;color:#ff8000">Min is -3.149e-08</div>
<div class="lg" style="left:756px;top:211px;color:#ff8000">at 6.100e-01</div>
<div class="lg" style="left:756px;top:224px;color:#ff8000">Max is 1.375e+08</div>
<div class="lg" style="left:756px;top:237px;color:#ff8000">at 7.100e-01</div>
</div></div>
<div class="sunk" style="left:738px;top:309px;width:128px;height:20px;line-height:14px;font-size:10.7px">( 8.15 , 1.702E+08 )</div>
<div class="btn" style="left:764px;top:343px;width:67px;height:21px;border:2px solid #0078d7;padding-top:2px;padding-right:1px;font-size:10.5px;letter-spacing:0">OK</div>
</body></html>
